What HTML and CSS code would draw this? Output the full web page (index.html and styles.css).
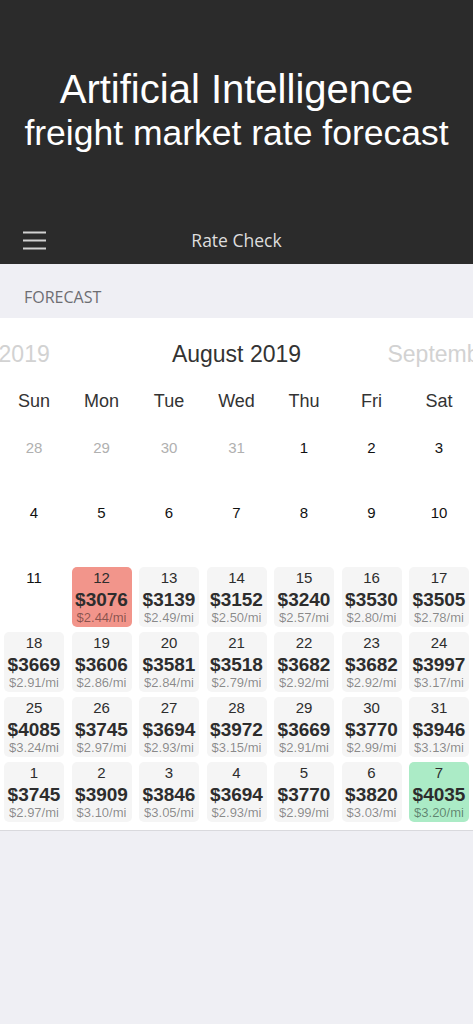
FILE: index.html
```html
<!DOCTYPE html>
<html lang="en">
<head>
<meta charset="utf-8">
<title>Rate Check</title>
<link rel="stylesheet" href="styles.css">
</head>
<body>
<header class="header">
  <div class="hero">
    <h1 class="hero-title"><span class="line1">Artificial Intelligence</span><span class="line2">freight market rate forecast</span></h1>
  </div>
  <nav class="nav">
    <div class="nav-left">
      <svg class="menu-icon" width="23" height="19" viewBox="0 0 23 19" aria-hidden="true">
        <rect x="0" y="0.5" width="23" height="2" fill="#d2d2d2"/>
        <rect x="0" y="8.5" width="23" height="2" fill="#d2d2d2"/>
        <rect x="0" y="16.5" width="23" height="2" fill="#d2d2d2"/>
      </svg>
    </div>
    <div class="nav-title">Rate Check</div>
    <div class="nav-right"></div>
  </nav>
</header>

<div class="section-label">FORECAST</div>

<section class="calendar">
  <div class="months">
    <div class="month side">July 2019</div>
    <div class="month current">August 2019</div>
    <div class="month side">September 2019</div>
  </div>
  <div class="weekdays">
    <div>Sun</div><div>Mon</div><div>Tue</div><div>Wed</div><div>Thu</div><div>Fri</div><div>Sat</div>
  </div>
  <div class="grid">
    <div class="day empty muted"><span class="num">28</span></div>
    <div class="day empty muted"><span class="num">29</span></div>
    <div class="day empty muted"><span class="num">30</span></div>
    <div class="day empty muted"><span class="num">31</span></div>
    <div class="day empty"><span class="num">1</span></div>
    <div class="day empty"><span class="num">2</span></div>
    <div class="day empty"><span class="num">3</span></div>

    <div class="day empty"><span class="num">4</span></div>
    <div class="day empty"><span class="num">5</span></div>
    <div class="day empty"><span class="num">6</span></div>
    <div class="day empty"><span class="num">7</span></div>
    <div class="day empty"><span class="num">8</span></div>
    <div class="day empty"><span class="num">9</span></div>
    <div class="day empty"><span class="num">10</span></div>

    <div class="day empty"><span class="num">11</span></div>
    <div class="day rate low"><span class="num">12</span><span class="price">$3076</span><span class="mi">$2.44/mi</span></div>
    <div class="day rate"><span class="num">13</span><span class="price">$3139</span><span class="mi">$2.49/mi</span></div>
    <div class="day rate"><span class="num">14</span><span class="price">$3152</span><span class="mi">$2.50/mi</span></div>
    <div class="day rate"><span class="num">15</span><span class="price">$3240</span><span class="mi">$2.57/mi</span></div>
    <div class="day rate"><span class="num">16</span><span class="price">$3530</span><span class="mi">$2.80/mi</span></div>
    <div class="day rate"><span class="num">17</span><span class="price">$3505</span><span class="mi">$2.78/mi</span></div>

    <div class="day rate"><span class="num">18</span><span class="price">$3669</span><span class="mi">$2.91/mi</span></div>
    <div class="day rate"><span class="num">19</span><span class="price">$3606</span><span class="mi">$2.86/mi</span></div>
    <div class="day rate"><span class="num">20</span><span class="price">$3581</span><span class="mi">$2.84/mi</span></div>
    <div class="day rate"><span class="num">21</span><span class="price">$3518</span><span class="mi">$2.79/mi</span></div>
    <div class="day rate"><span class="num">22</span><span class="price">$3682</span><span class="mi">$2.92/mi</span></div>
    <div class="day rate"><span class="num">23</span><span class="price">$3682</span><span class="mi">$2.92/mi</span></div>
    <div class="day rate"><span class="num">24</span><span class="price">$3997</span><span class="mi">$3.17/mi</span></div>

    <div class="day rate"><span class="num">25</span><span class="price">$4085</span><span class="mi">$3.24/mi</span></div>
    <div class="day rate"><span class="num">26</span><span class="price">$3745</span><span class="mi">$2.97/mi</span></div>
    <div class="day rate"><span class="num">27</span><span class="price">$3694</span><span class="mi">$2.93/mi</span></div>
    <div class="day rate"><span class="num">28</span><span class="price">$3972</span><span class="mi">$3.15/mi</span></div>
    <div class="day rate"><span class="num">29</span><span class="price">$3669</span><span class="mi">$2.91/mi</span></div>
    <div class="day rate"><span class="num">30</span><span class="price">$3770</span><span class="mi">$2.99/mi</span></div>
    <div class="day rate"><span class="num">31</span><span class="price">$3946</span><span class="mi">$3.13/mi</span></div>

    <div class="day rate"><span class="num">1</span><span class="price">$3745</span><span class="mi">$2.97/mi</span></div>
    <div class="day rate"><span class="num">2</span><span class="price">$3909</span><span class="mi">$3.10/mi</span></div>
    <div class="day rate"><span class="num">3</span><span class="price">$3846</span><span class="mi">$3.05/mi</span></div>
    <div class="day rate"><span class="num">4</span><span class="price">$3694</span><span class="mi">$2.93/mi</span></div>
    <div class="day rate"><span class="num">5</span><span class="price">$3770</span><span class="mi">$2.99/mi</span></div>
    <div class="day rate"><span class="num">6</span><span class="price">$3820</span><span class="mi">$3.03/mi</span></div>
    <div class="day rate high"><span class="num">7</span><span class="price">$4035</span><span class="mi">$3.20/mi</span></div>
  </div>
</section>
</body>
</html>
```

FILE: styles.css
```css
* { box-sizing: border-box; }

html, body {
  margin: 0;
  padding: 0;
}

body {
  background: #efeff4;
  font-family: "Liberation Sans", Arial, sans-serif;
  color: #2d2d2d;
  width: 473px;
}

.header {
  background: #2b2b2b;
}

.hero {
  padding: 67px 0 61px;
  text-align: center;
}

.hero-title {
  margin: 0;
  color: #ffffff;
  font-family: "Liberation Sans", Arial, sans-serif;
  font-weight: 400;
}

.hero-title .line1,
.hero-title .line2 {
  display: block;
  line-height: 44px;
  white-space: nowrap;
}

.hero-title .line1 { font-size: 40px; }
.hero-title .line2 { font-size: 35.5px; }

.nav {
  height: 48px;
  display: grid;
  grid-template-columns: 1fr auto 1fr;
  align-items: center;
}

.nav-left {
  padding-left: 23px;
  display: flex;
  align-items: center;
}

.menu-icon {
  display: block;
  margin-top: 1px;
}

.nav-title {
  font-family: "Open Sans", "Noto Sans", sans-serif;
  font-size: 17.5px;
  color: #dedede;
  line-height: 24px;
}

.section-label {
  height: 54px;
  padding: 22px 0 0 24px;
  font-family: "Open Sans", "Noto Sans", sans-serif;
  font-size: 16px;
  line-height: 22px;
  color: #6d6d72;
  background: #efeff4;
}

.calendar {
  background: #ffffff;
  padding: 22px 0 8px;
  border-bottom: 1px solid #d9d9dd;
}

.months {
  display: flex;
  justify-content: center;
  overflow: hidden;
  height: 28px;
}

.month {
  flex: none;
  width: 236px;
  text-align: center;
  white-space: nowrap;
  font-size: 23px;
  line-height: 28px;
}

.month.current { color: #333333; }
.month.side { color: #d2d2d2; }

.weekdays {
  margin-top: 21px;
  display: grid;
  grid-template-columns: repeat(7, 1fr);
  column-gap: 7.5px;
  padding: 0 4px;
  text-align: center;
  font-size: 18px;
  line-height: 24px;
  color: #333333;
}

.grid {
  margin-top: 24px;
  display: grid;
  grid-template-columns: repeat(7, 1fr);
  grid-auto-rows: 60px;
  column-gap: 7.5px;
  row-gap: 5px;
  padding: 0 4px;
}

.day {
  display: flex;
  flex-direction: column;
  align-items: center;
  padding-top: 3px;
  border-radius: 5px;
}

.day.rate { background: #f5f5f5; }
.day.low { background: #f2958b; }
.day.high { background: #abebc6; }

.num {
  font-size: 15px;
  line-height: 16px;
  color: #2d2d2d;
}

.day.empty .num { color: #111111; }
.day.empty.muted .num { color: #b0b0b0; }

.price {
  margin-top: 3px;
  font-size: 19px;
  line-height: 21px;
  font-weight: 700;
  color: #2d2d2d;
  white-space: nowrap;
}

.mi {
  font-size: 13px;
  line-height: 15px;
  color: rgba(0, 0, 0, 0.45);
  white-space: nowrap;
}
```
